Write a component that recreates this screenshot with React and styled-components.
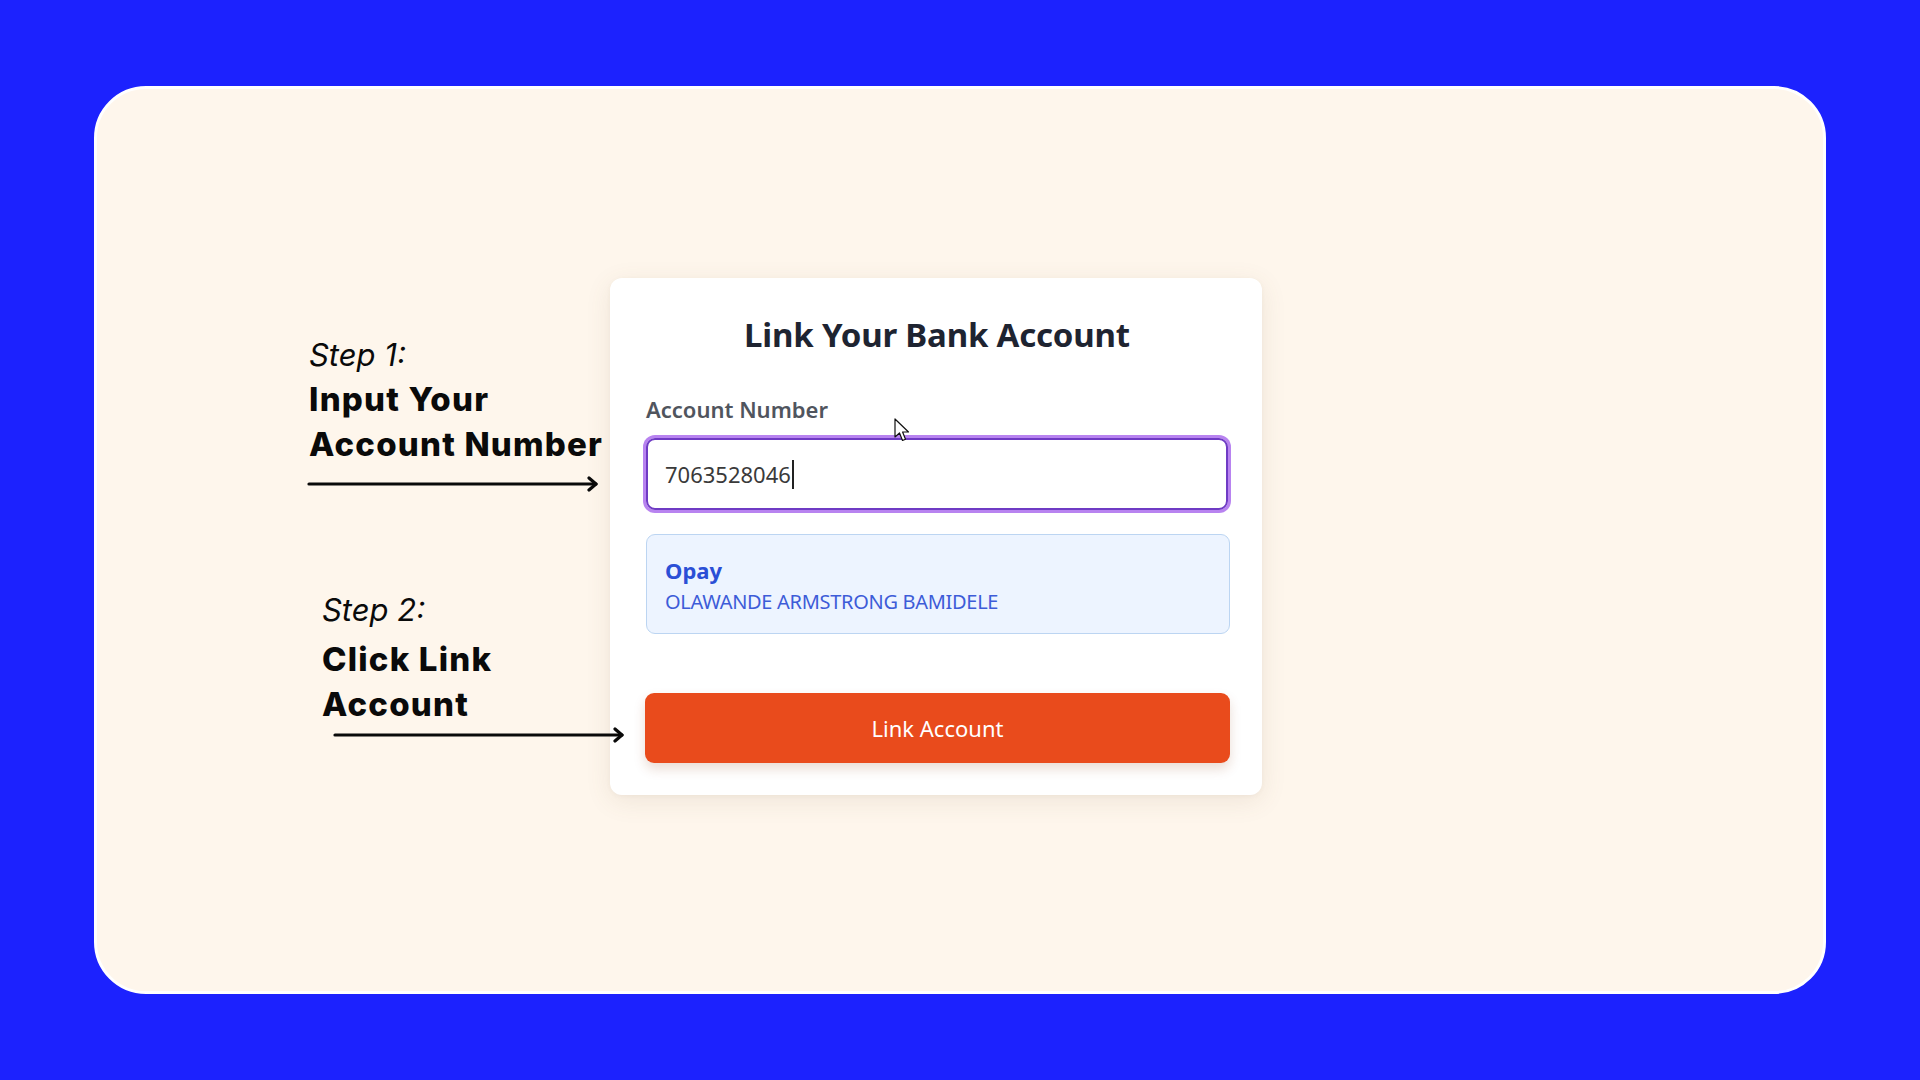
import React from "react";
import styled, { createGlobalStyle } from "styled-components";

const Global = createGlobalStyle`
  html, body { margin: 0; padding: 0; }
  body {
    background: #1c22fe;
    width: 1920px;
    height: 1080px;
    overflow: hidden;
  }
  * { box-sizing: border-box; }
`;

const Page = styled.div`
  width: 1920px;
  height: 1080px;
  padding: 86px 94px 0 94px;
`;

const Stage = styled.div`
  width: 1732px;
  height: 908px;
  background: #fef6ec;
  border: 3px solid #ffffff;
  border-radius: 52px;
  display: flex;
  align-items: flex-start;
  padding: 189px 0 0 210px;
`;

const Notes = styled.div`
  width: 303px;
  flex-shrink: 0;
  display: flex;
  flex-direction: column;
  font-family: Inter, "Noto Sans", sans-serif;
  color: #0a0a0a;
`;

const Note = styled.div`
  display: flex;
  flex-direction: column;
  margin-left: ${(p) => p.$indent || 0}px;
  margin-top: ${(p) => p.$top || 0}px;
`;

const StepLabel = styled.div`
  font-style: italic;
  font-weight: 400;
  font-size: 31px;
  line-height: 44px;
  margin-bottom: ${(p) => p.$gap || 0}px;
`;

const StepTitle = styled.div`
  font-weight: 800;
  font-size: 33px;
  line-height: 45px;
  letter-spacing: 1.2px;
  white-space: nowrap;
`;

const Arrow = styled.svg`
  position: relative;
  z-index: 2;
  display: block;
  margin-top: ${(p) => p.$top || 0}px;
  margin-left: ${(p) => p.$left || 0}px;
`;

const Card = styled.div`
  position: relative;
  width: 652px;
  flex-shrink: 0;
  background: #ffffff;
  border-radius: 12px;
  box-shadow: 0 6px 26px rgba(120, 90, 60, 0.11), 0 1px 4px rgba(120, 90, 60, 0.05);
  padding: 39px 32px 32px 34px;
  display: flex;
  flex-direction: column;
  font-family: "Noto Sans", "Open Sans", sans-serif;
`;

const Title = styled.h1`
  margin: 0;
  text-align: center;
  font-size: 33px;
  line-height: 36px;
  font-weight: 700;
  color: #1e2431;
  letter-spacing: -0.2px;
`;

const Label = styled.label`
  margin-top: 42px;
  font-size: 22px;
  line-height: 28px;
  font-weight: 600;
  color: #50555e;
  padding-left: 2px;
`;

const InputBox = styled.div`
  margin: 15px 2px 0 2px;
  height: 72px;
  border: 2px solid #6f3bc4;
  border-radius: 9px;
  box-shadow: 0 0 0 3px rgba(160, 90, 235, 0.75);
  display: flex;
  align-items: center;
  padding-left: 17px;
  font-size: 22px;
  color: #3a3a3a;
`;

const Caret = styled.span`
  display: inline-block;
  width: 2px;
  height: 29px;
  background: #222;
  margin-left: 1px;
`;

const Result = styled.div`
  margin: 24px 0 0 2px;
  height: 100px;
  background: #edf4ff;
  border: 1.5px solid #bcd5f2;
  border-radius: 9px;
  padding: 19px 18px 0 18px;
  display: flex;
  flex-direction: column;
`;

const Bank = styled.div`
  font-size: 22px;
  line-height: 32px;
  font-weight: 700;
  color: #2b4fd6;
`;

const Holder = styled.div`
  font-size: 20px;
  line-height: 32px;
  color: #3d5cd8;
  letter-spacing: -0.3px;
`;

const Button = styled.button`
  margin: 59px 0 0 1px;
  height: 70px;
  border: none;
  border-radius: 9px;
  background: #e94b1c;
  color: #ffffff;
  font-family: "Noto Sans", "Open Sans", sans-serif;
  font-size: 22px;
  box-shadow: 0 6px 12px rgba(140, 60, 20, 0.18);
  cursor: pointer;
`;

const Pointer = styled.svg`
  position: absolute;
  left: 284px;
  top: 140px;
`;

function LineArrow({ width, top, left }) {
  return (
    <Arrow $top={top} $left={left} width={width} height="16" viewBox={`0 0 ${width} 16`}>
      <line x1="2" y1="8" x2={width - 3} y2="8" stroke="#0a0a0a" strokeWidth="3.2" strokeLinecap="round" />
      <polyline
        points={`${width - 10},2 ${width - 3},8 ${width - 10},14`}
        fill="none"
        stroke="#0a0a0a"
        strokeWidth="3.2"
        strokeLinecap="round"
        strokeLinejoin="round"
      />
    </Arrow>
  );
}

export default function App() {
  return (
    <>
      <Global />
      <Page>
        <Stage>
          <Notes>
            <Note $top={55} $indent={2}>
              <StepLabel>Step 1:</StepLabel>
              <StepTitle>Input Your</StepTitle>
              <StepTitle>Account Number</StepTitle>
              <LineArrow width={292} top={9} left={-2} />
            </Note>
            <Note $top={96} $indent={15}>
              <StepLabel $gap={5}>Step 2:</StepLabel>
              <StepTitle>Click Link</StepTitle>
              <StepTitle>Account</StepTitle>
              <LineArrow width={292} top={0} left={11} />
            </Note>
          </Notes>
          <Card>
            <Title>Link Your Bank Account</Title>
            <Label>Account Number</Label>
            <InputBox>
              7063528046
              <Caret />
            </InputBox>
            <Result>
              <Bank>Opay</Bank>
              <Holder>OLAWANDE ARMSTRONG BAMIDELE</Holder>
            </Result>
            <Button>Link Account</Button>
            <Pointer width="16" height="25" viewBox="0 0 16 25">
              <path
                d="M1 1 L1 19 L5.5 15 L8.5 22.5 L11.5 21.2 L8.6 14 L14.5 14 Z"
                fill="#ffffff"
                stroke="#111"
                strokeWidth="1.2"
                strokeLinejoin="round"
              />
            </Pointer>
          </Card>
        </Stage>
      </Page>
    </>
  );
}
